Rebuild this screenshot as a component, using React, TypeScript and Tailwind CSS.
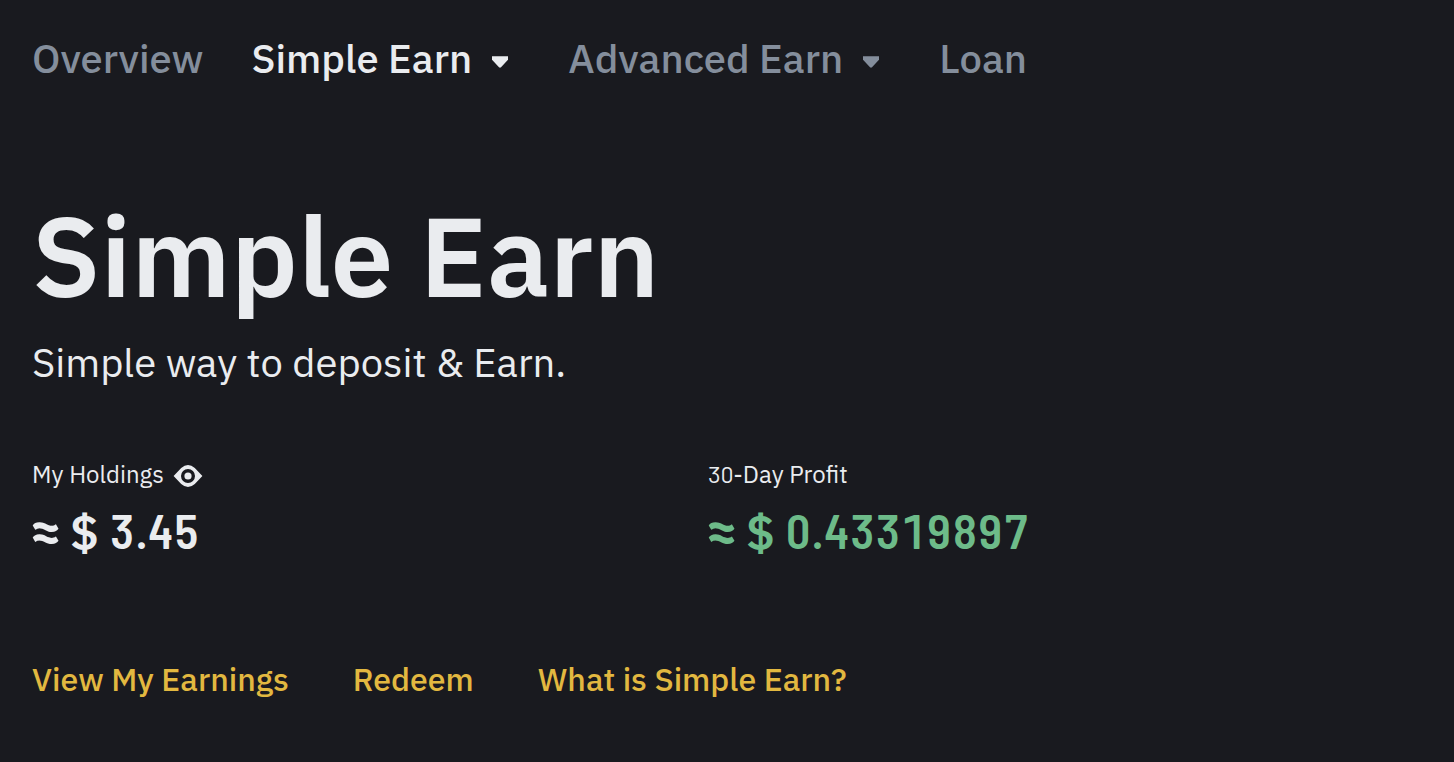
import clsx from "clsx";

interface NavItem {
  label: string;
  active?: boolean;
  hasMenu?: boolean;
  className: string;
}

const navItems: NavItem[] = [
  { label: "Overview", className: "mr-12" },
  { label: "Simple Earn", active: true, hasMenu: true, className: "mr-[59px]" },
  { label: "Advanced Earn", hasMenu: true, className: "mr-[59px]" },
  { label: "Loan", className: "" },
];

const links = ["View My Earnings", "Redeem", "What is Simple Earn?"];

function Caret() {
  return (
    <svg className="ml-[19px] mt-2 h-3 w-[18px]" viewBox="0 0 18 12" fill="currentColor">
      <path d="M1 0.3h16v3.4L10 11.3q-1 .8-2 0L1 3.7z" />
    </svg>
  );
}

function EyeIcon() {
  return (
    <svg className="ml-[9px] mt-1 h-[22px] w-[30px]" viewBox="0 0 30 22">
      <path
        fill="currentColor"
        fillRule="evenodd"
        d="M.6 11 8.2 3Q15-3 21.8 3L29.4 11 21.8 19Q15 25 8.2 19zM15 4a7 7 0 1 0 0 14 7 7 0 0 0 0-14z"
      />
      <circle cx="15" cy="11" r="3.6" fill="currentColor" />
    </svg>
  );
}

function Amount({ value }: { value: string }) {
  return (
    <div className="mt-[15px] flex h-14 whitespace-pre text-[48px] leading-[56px] font-bold">
      <span className="-ml-0.5 w-10 text-[52px] leading-[50px]">≈</span>
      <span className="w-[40px] leading-[54px] font-semibold">$</span>
      <span className="font-['Barlow_Semi_Condensed','Barlow','Roboto',sans-serif] leading-[50px] font-semibold tracking-[1.3px] tabular-nums">{value}</span>
    </div>
  );
}

export default function App() {
  return (
    <div className="h-[762px] w-full overflow-hidden bg-[#191a1f] px-8 pt-[34px] font-['IBM_Plex_Sans','Noto_Sans',sans-serif] text-[#eaecef]">
      <nav className="flex items-center text-[40px] leading-[48px] font-medium">
        {navItems.map((item) => (
          <a
            key={item.label}
            className={clsx("flex items-center whitespace-nowrap", item.className, item.active ? "text-[#eaecef]" : "text-[#848e9c]")}
          >
            {item.label}
            {item.hasMenu && <Caret />}
          </a>
        ))}
      </nav>

      <h1 className="mt-[109px] text-[112px] leading-[128px] font-semibold">Simple Earn</h1>
      <p className="mt-[19px] text-[40px] leading-[48px]">Simple way to deposit &amp; Earn.</p>

      <div className="mt-[72px] flex">
        <div className="w-[676px]">
          <div className="flex h-8 items-center text-2xl">
            My Holdings
            <EyeIcon />
          </div>
          <Amount value="3.45" />
        </div>
        <div>
          <div className="h-8 text-2xl">
            <span className="font-['Barlow','Roboto',sans-serif] tabular-nums">30</span>-Day Profit
          </div>
          <div className="text-[#6dbb89]">
            <Amount value="0.43319897" />
          </div>
        </div>
      </div>

      <div className="mt-[98px] flex gap-16 text-[32px] leading-[40px] font-medium text-[#e2b840]">
        {links.map((link) => (
          <a key={link}>{link}</a>
        ))}
      </div>
    </div>
  );
}
